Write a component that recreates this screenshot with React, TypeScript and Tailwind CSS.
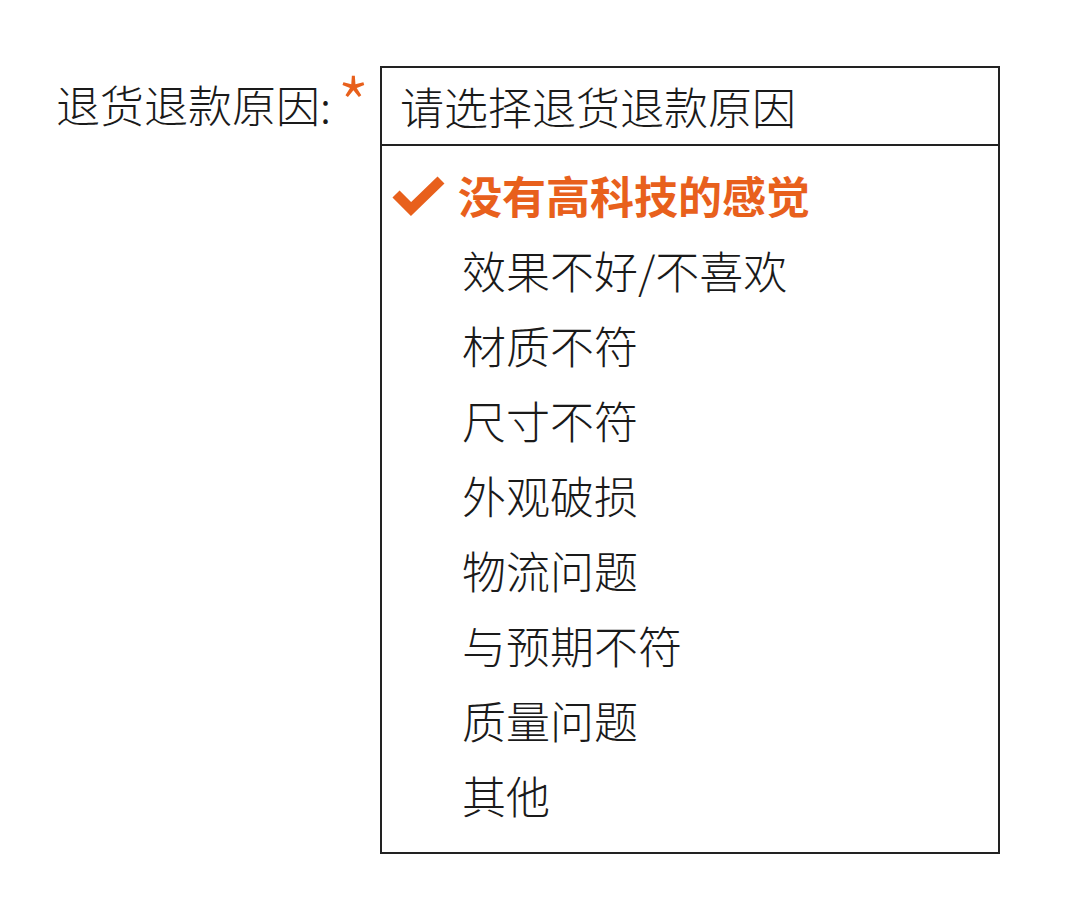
const reasons = [
  '效果不好/不喜欢',
  '材质不符',
  '尺寸不符',
  '外观破损',
  '物流问题',
  '与预期不符',
  '质量问题',
  '其他',
];

export default function App() {
  return (
    <div
      className="flex h-[914px] w-[1080px] bg-white pt-[66px] text-[#1a1a1a]"
      style={{ fontFamily: '"Noto Sans CJK SC", "Noto Sans", sans-serif' }}
    >
      <div className="flex w-[380px] shrink-0 items-start pl-[56px] pt-[12px]">
        <span className="text-[44px] font-light leading-[52px]">退货退款原因:</span>
        <span className="ml-[6px] -mt-[1px] text-[74px] font-extralight leading-[50px] text-[#e8601c]">*</span>
      </div>

      <div className="flex h-[788px] w-[620px] flex-col border-2 border-[#222]">
        <div className="flex h-[78px] shrink-0 items-center border-b-2 border-[#222] pl-[18px]">
          <span className="text-[44px] font-light leading-none">请选择退货退款原因</span>
        </div>

        <ul className="flex flex-col pt-[11px]">
          <li className="flex h-[75px] items-center pl-[10px]">
            <svg width="54" height="42" viewBox="0 0 54 42" className="shrink-0">
              <path d="M4 20 L19 35 L49 6" fill="none" stroke="#e8601c" strokeWidth="10" strokeLinejoin="miter" />
            </svg>
            <span className="ml-[12px] text-[44px] font-bold leading-none text-[#e8601c]">没有高科技的感觉</span>
          </li>
          {reasons.map((r) => (
            <li key={r} className="flex h-[75px] items-center pl-[80px]">
              <span className="text-[44px] font-light leading-none">{r}</span>
            </li>
          ))}
        </ul>
      </div>
    </div>
  );
}
